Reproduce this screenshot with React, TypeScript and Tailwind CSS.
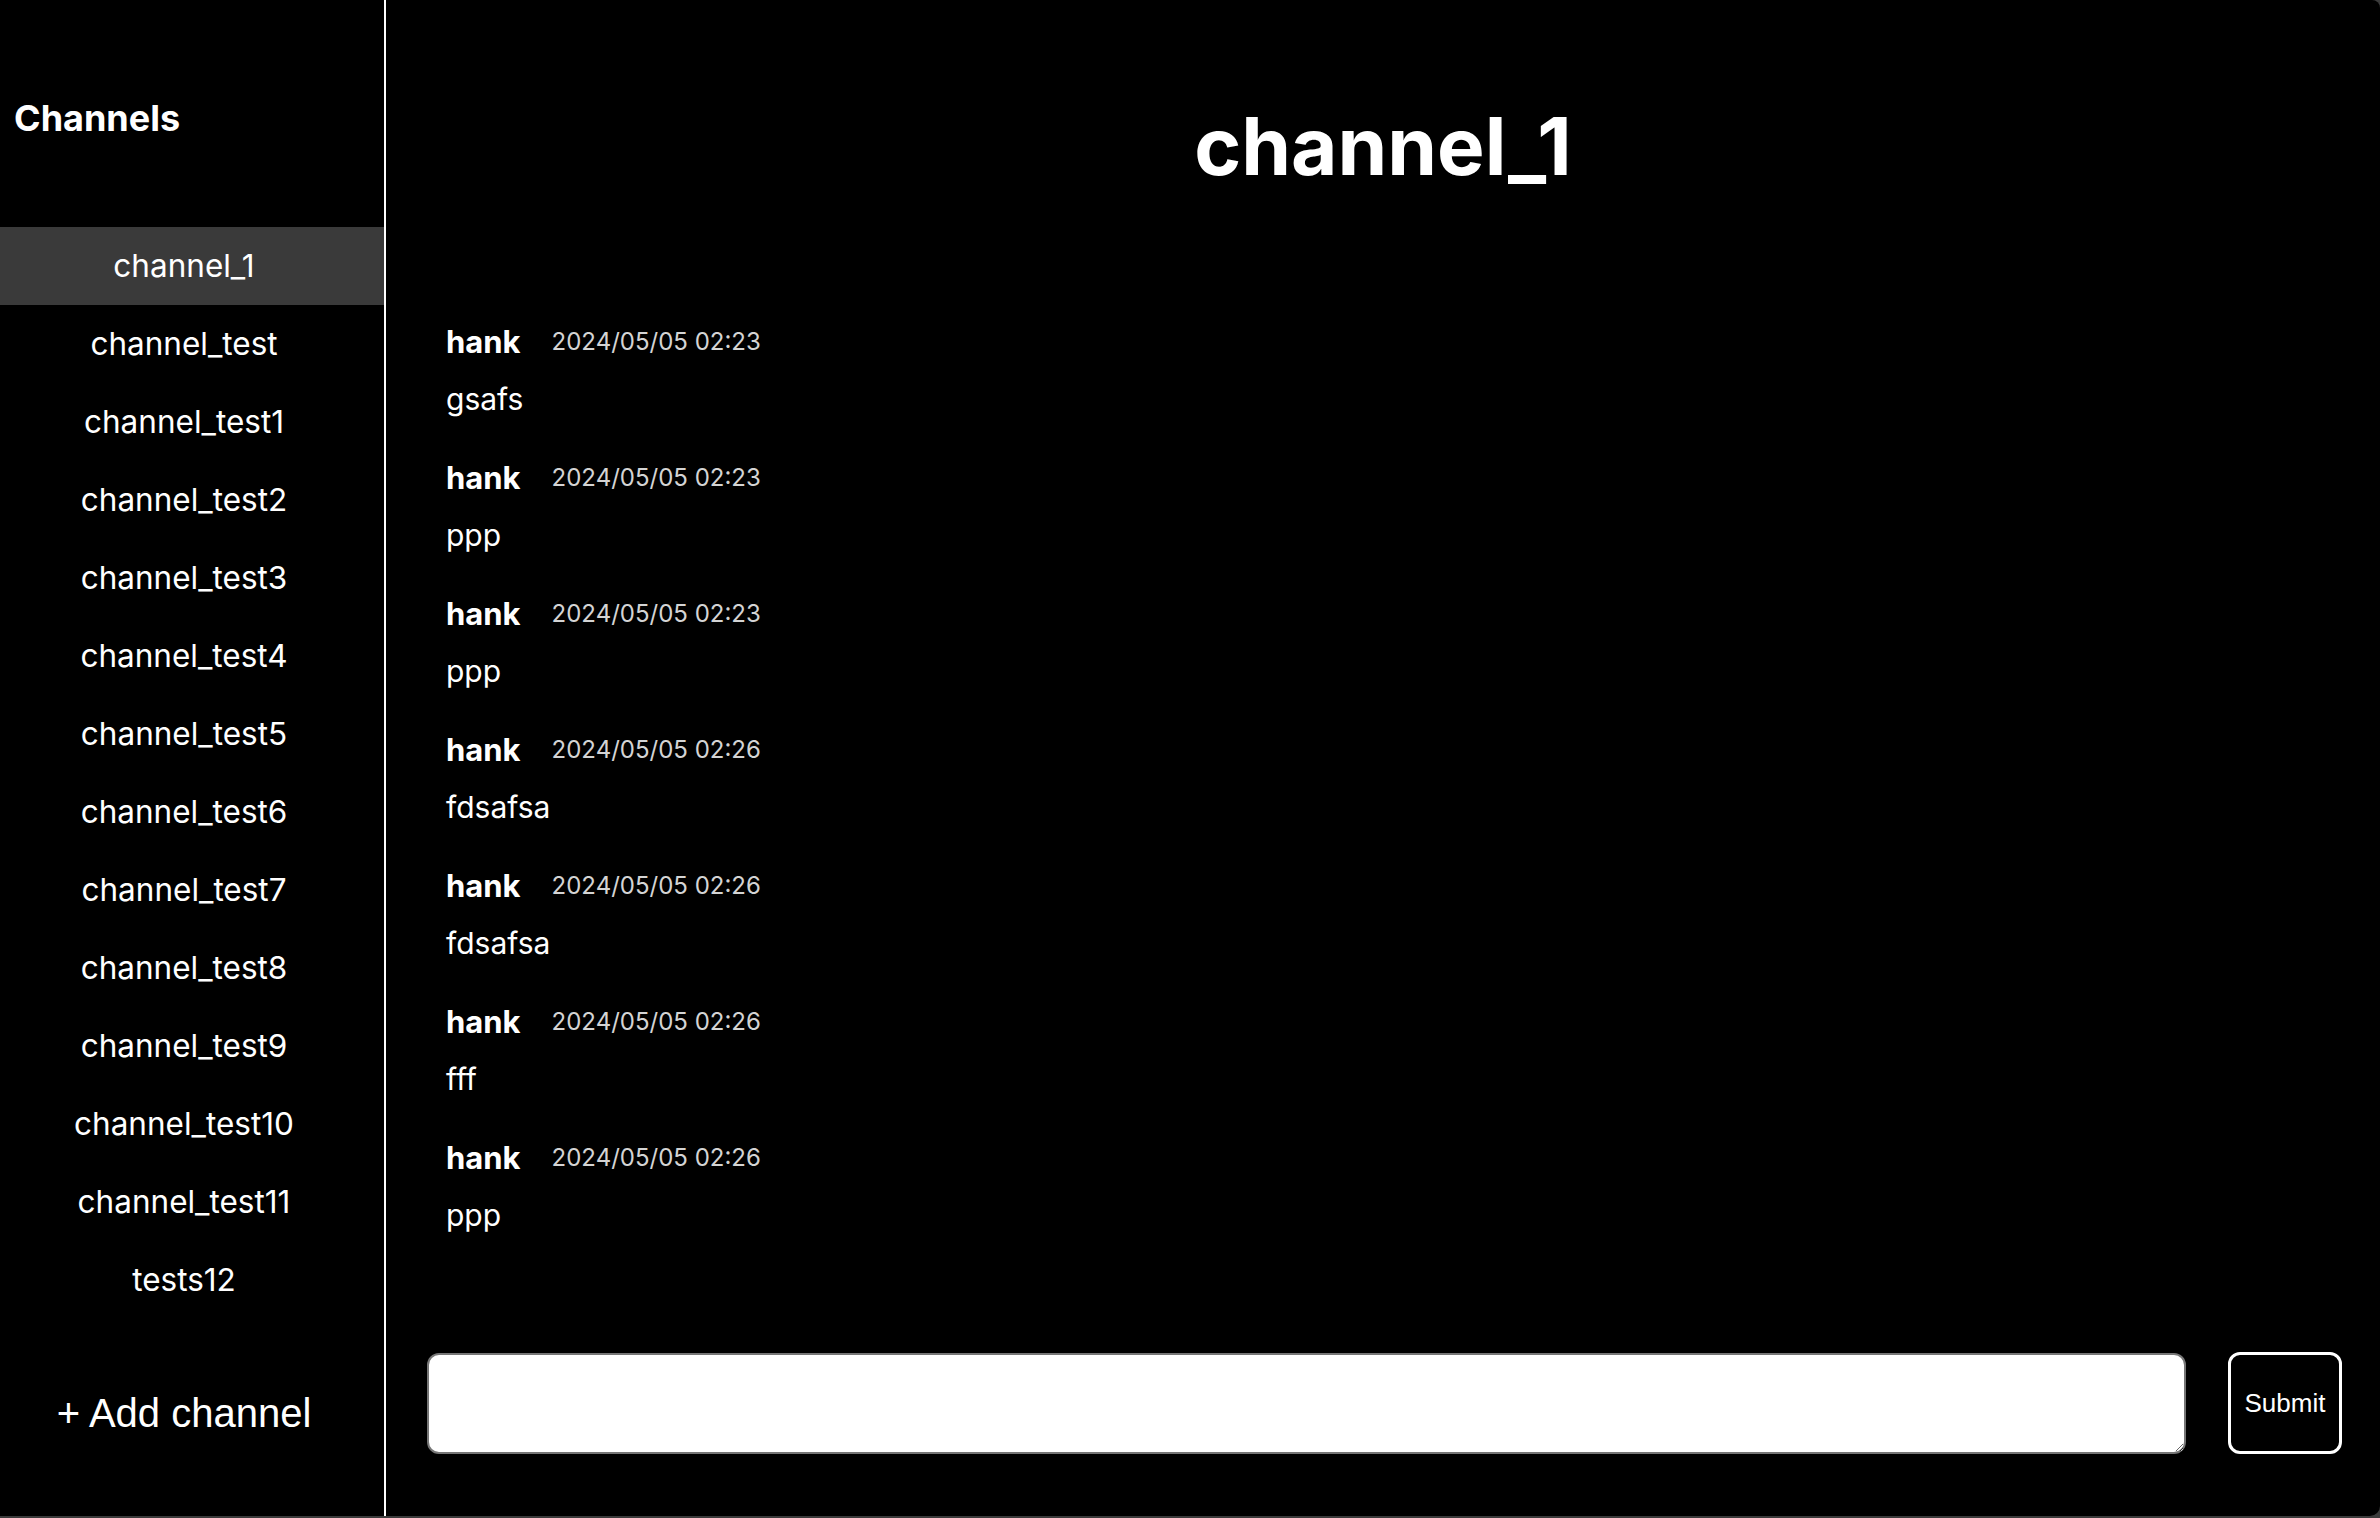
import { useState } from 'react';

const channels = [
  'channel_1',
  'channel_test',
  'channel_test1',
  'channel_test2',
  'channel_test3',
  'channel_test4',
  'channel_test5',
  'channel_test6',
  'channel_test7',
  'channel_test8',
  'channel_test9',
  'channel_test10',
  'channel_test11',
  'tests12',
];

const messages = [
  { user: 'hank', time: '2024/05/05 02:23', text: 'gsafs' },
  { user: 'hank', time: '2024/05/05 02:23', text: 'ppp' },
  { user: 'hank', time: '2024/05/05 02:23', text: 'ppp' },
  { user: 'hank', time: '2024/05/05 02:26', text: 'fdsafsa' },
  { user: 'hank', time: '2024/05/05 02:26', text: 'fdsafsa' },
  { user: 'hank', time: '2024/05/05 02:26', text: 'fff' },
  { user: 'hank', time: '2024/05/05 02:26', text: 'ppp' },
];

export default function App() {
  const [active, setActive] = useState('channel_1');
  const [draft, setDraft] = useState('');

  return (
    <div className="h-screen w-full bg-[#3b3b3b] font-['Inter',sans-serif] text-white">
      <div className="flex h-[1516px] overflow-hidden rounded-tr-[8px] rounded-br-[10px] bg-black">
        {/* sidebar */}
        <aside className="flex w-[386px] shrink-0 flex-col border-r-2 border-white">
          <h2 className="pt-[91px] pb-[82px] pl-[14px] text-[36px] leading-[54px] font-bold">Channels</h2>
          <ul className="flex flex-col">
            {channels.map((c) => (
              <li
                key={c}
                onClick={() => setActive(c)}
                className={`flex h-[78px] cursor-pointer items-center justify-center pr-[16px] text-[31.5px] ${
                  c === active ? 'bg-[#3a3a3a]' : ''
                }`}
              >
                {c}
              </li>
            ))}
          </ul>
          <button className="flex h-[188px] items-center justify-center pr-[16px] font-['Liberation_Sans',Arial,sans-serif] text-[40px]">
            + Add channel
          </button>
        </aside>

        {/* main */}
        <main className="flex flex-1 flex-col">
          <h1 className="pt-[99px] text-center text-[80px] leading-[94px] font-bold">{active}</h1>
          <div className="mt-[126px] flex flex-1 flex-col gap-[33px] pl-[60px]">
            {messages.map((m, i) => (
              <div key={i} className="flex flex-col gap-[13px]">
                <div className="flex items-center gap-[31px] leading-[45px]">
                  <span className="text-[31px] font-bold">{m.user}</span>
                  <span className="text-[24px] text-[#d4d4d4]">{m.time}</span>
                </div>
                <div className="text-[30px] leading-[45px]">{m.text}</div>
              </div>
            ))}
          </div>
          <div className="flex items-center gap-[42px] pr-[38px] pb-[62px] pl-[41px]">
            <textarea
              value={draft}
              onChange={(e) => setDraft(e.target.value)}
              className="h-[101px] flex-1 rounded-[12px] border-2 border-[#767676] bg-white px-3 py-2 text-[24px] text-black outline-none"
            />
            <button className="h-[102px] w-[114px] rounded-[12px] border-[3px] border-white bg-black font-['Liberation_Sans',Arial,sans-serif] text-[26px] text-white">
              Submit
            </button>
          </div>
        </main>
      </div>
    </div>
  );
}
